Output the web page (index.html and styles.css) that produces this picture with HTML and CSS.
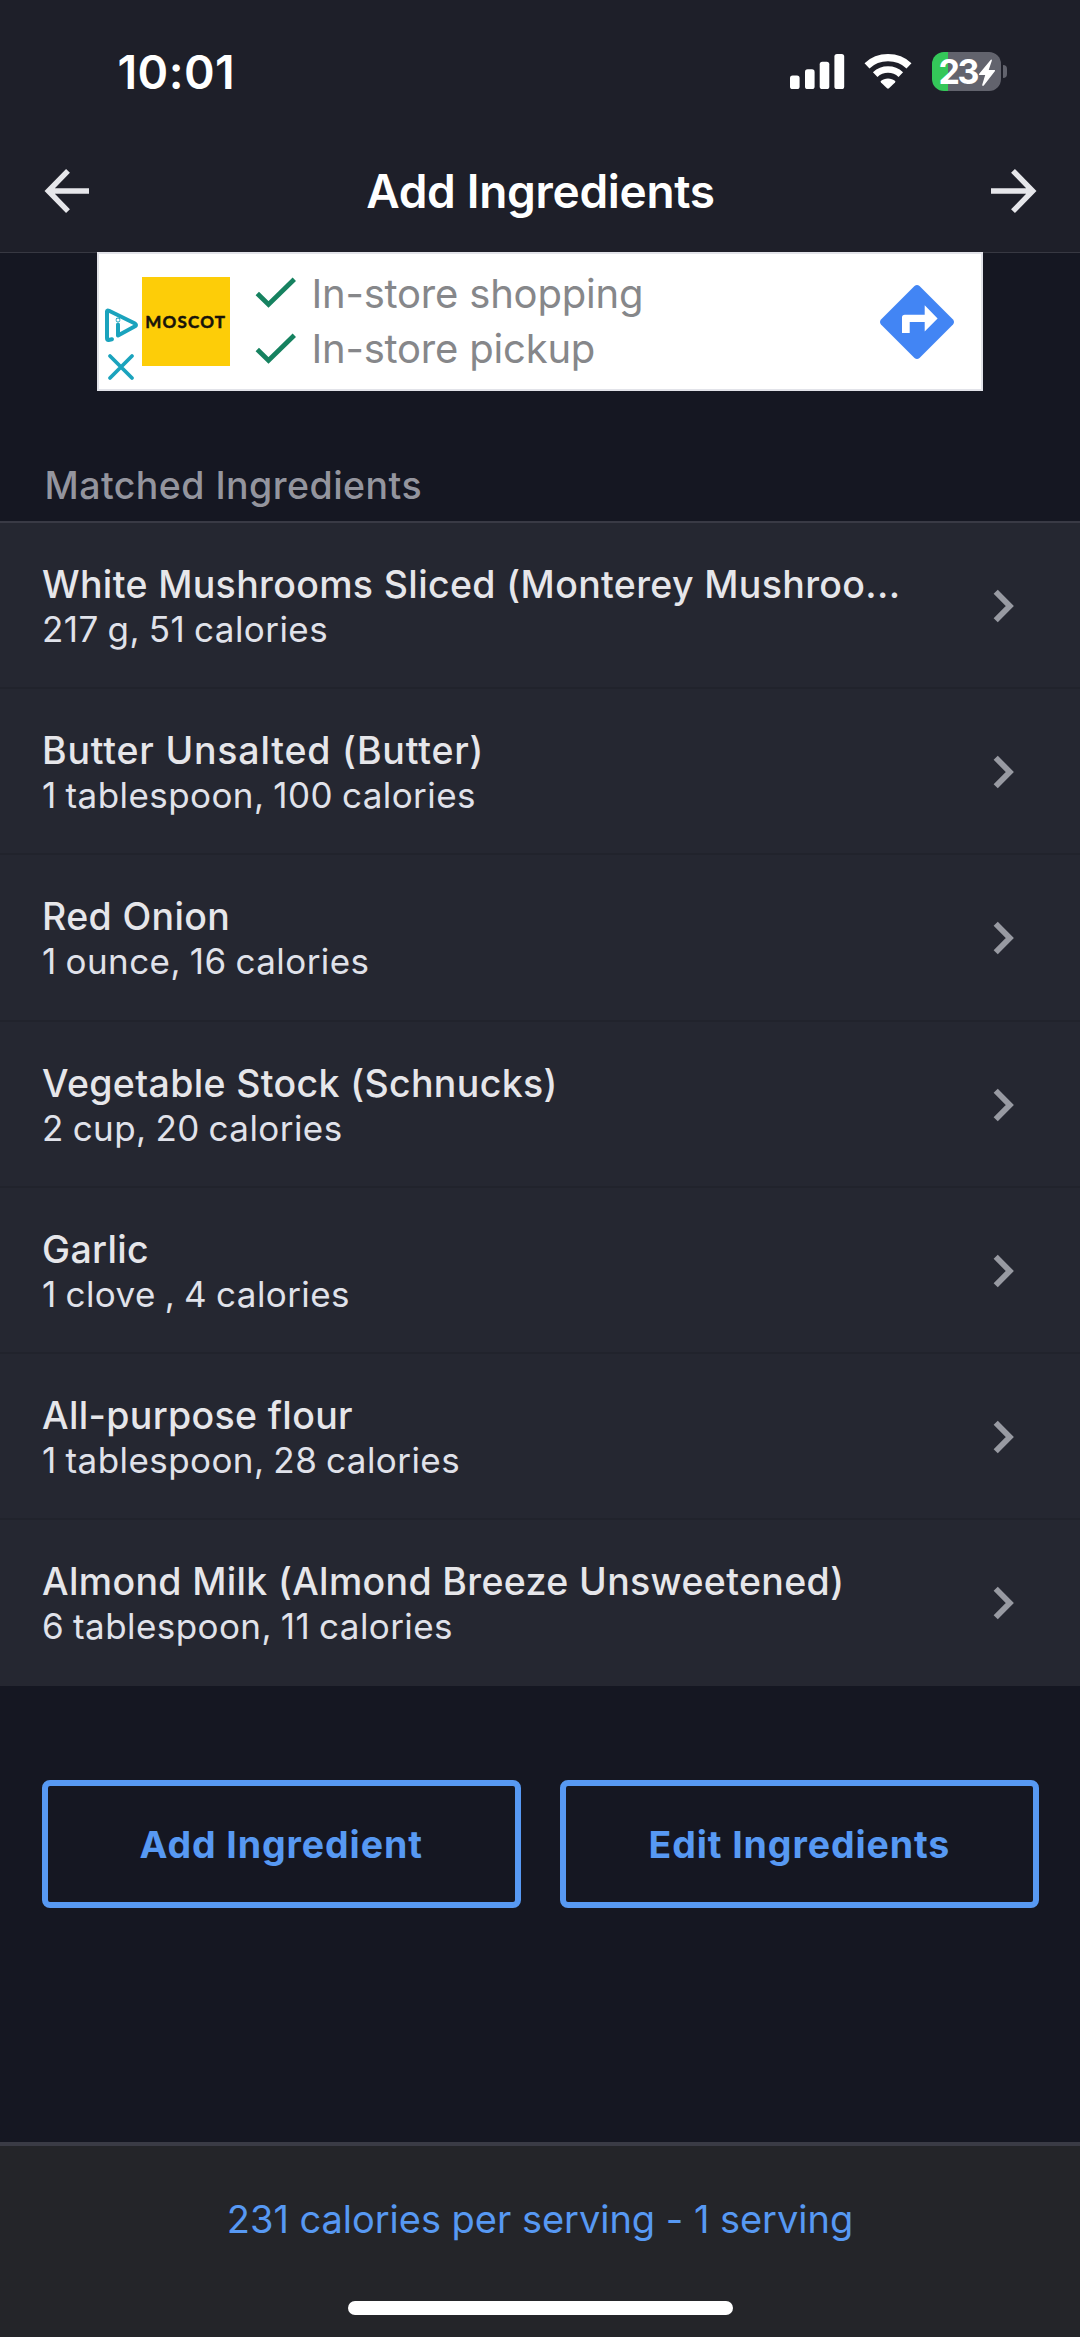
FILE: index.html
```
<!DOCTYPE html>
<html lang="en">
<head>
<meta charset="utf-8">
<title>Add Ingredients</title>
<link rel="stylesheet" href="styles.css">
</head>
<body>
<svg width="0" height="0" class="defs" aria-hidden="true">
  <symbol id="chevron" viewBox="0 0 22 34"><path d="M2.7 2.7 16.8 17 2.7 31.3" fill="none" stroke="currentColor" stroke-width="5.8"/></symbol>
  <symbol id="check" viewBox="0 0 42 32"><path d="M2.3 16.5 13.5 27.5 39.3 2.3" fill="none" stroke="currentColor" stroke-width="4.8"/></symbol>
</svg>
<div class="screen">
  <header class="header">
    <div class="status">
      <span class="time">10:01</span>
      <div class="indicators">
        <svg class="signal" width="55" height="36" viewBox="0 0 55 36" fill="#fff"><rect x="0" y="21.5" width="9.6" height="13.5" rx="2.6"/><rect x="15" y="15.3" width="9.6" height="19.7" rx="2.6"/><rect x="29.7" y="7.7" width="9.6" height="27.3" rx="2.6"/><rect x="44.4" y="0" width="9.8" height="35" rx="2.6"/></svg>
        <svg class="wifi" width="48" height="36" viewBox="0 0 48 36"><g fill="none" stroke="#fff"><path d="M3 11.8C14.5.9 33.5.9 45 11.8" stroke-width="7.2"/><path d="M11.2 20.6C18.5 13.8 29.5 13.8 36.8 20.6" stroke-width="6.6"/></g><path d="M16.8 27C20.5 23.5 27.5 23.5 31.2 27Q31.7 27.7 31 28.4L25 34.3Q24 35.2 23 34.3L17 28.4Q16.300 27.7 16.8 27Z" fill="#fff"/></svg>
        <div class="battery">
          <span class="level">23</span>
          <svg class="bolt" width="18" height="28" viewBox="0 0 18 28" fill="#fff"><path d="M12.8.8 1 15Q.5 16 1.6 16H7.2L4.2 25.7Q4.3 27.6 5.8 26.6L17 12Q17.4 10.9 16.3 10.9H10.7L13.9 1.6Q13.9.2 12.8.8Z"/></svg>
        </div>
        <span class="nub"></span>
      </div>
    </div>
    <nav class="nav">
      <svg width="46" height="46" viewBox="0 0 46 46" fill="none" stroke="#e6e6ea" stroke-width="5.4"><path d="M24 2.8 4.3 23 24 43.2M5 23H45"/></svg>
      <h1 class="title">Add Ingredients</h1>
      <svg width="46" height="46" viewBox="0 0 46 46" fill="none" stroke="#e6e6ea" stroke-width="5.4"><path d="M22 2.8 41.7 23 22 43.2M41 23H0"/></svg>
    </nav>
  </header>

  <section class="ad">
    <div class="ad-controls">
      <svg width="34" height="34" viewBox="0 0 34 34" fill="none" stroke="#1aa3bd" stroke-width="4" stroke-linecap="round" stroke-linejoin="round"><path d="M8 31.2 4.500 32Q3 32 3 30V3.500Q3 2 5 2.8L31 15.500Q33 17 31 18.300L14 27.500V16.500"/><circle cx="14" cy="12" r=".4"/></svg>
      <svg width="28" height="28" viewBox="0 0 28 28" stroke="#1aa3bd" stroke-width="3.8" stroke-linecap="round"><path d="M3 3 25 25M25 3 3 25"/></svg>
    </div>
    <div class="ad-logo">MOSCOT</div>
    <div class="ad-lines">
      <div class="ad-line"><svg class="check" width="42" height="32"><use href="#check"/></svg><span>In-store shopping</span></div>
      <div class="ad-line"><svg class="check" width="42" height="32"><use href="#check"/></svg><span>In-store pickup</span></div>
    </div>
    <svg class="directions" width="76" height="76" viewBox="0 0 76 76"><path d="M35.5 2Q38 0 40.5 2L74 35.5Q76 38 74 40.5L40.5 74Q38 76 35.5 74L2 40.5Q0 38 2 35.5Z" fill="#4285f4"/><path d="M23 49V33.5Q23 30.7 25.8 30.7H45.7V21.3L58.6 34.5 45.7 47.6V38H30.7V49Z" fill="#fff"/></svg>
  </section>

  <h2 class="section-title">Matched Ingredients</h2>
  <ul class="list">
    <li class="row"><div class="info"><div class="name">White Mushrooms Sliced (Monterey Mushroo...</div><div class="detail">217 g, 51 calories</div></div><svg class="chevron" width="22" height="34"><use href="#chevron"/></svg></li>
    <li class="row"><div class="info"><div class="name name-wide">Butter Unsalted (Butter)</div><div class="detail">1 tablespoon, 100 calories</div></div><svg class="chevron" width="22" height="34"><use href="#chevron"/></svg></li>
    <li class="row"><div class="info"><div class="name">Red Onion</div><div class="detail">1 ounce, 16 calories</div></div><svg class="chevron" width="22" height="34"><use href="#chevron"/></svg></li>
    <li class="row"><div class="info"><div class="name">Vegetable Stock (Schnucks)</div><div class="detail">2 cup, 20 calories</div></div><svg class="chevron" width="22" height="34"><use href="#chevron"/></svg></li>
    <li class="row"><div class="info"><div class="name">Garlic</div><div class="detail">1 clove , 4 calories</div></div><svg class="chevron" width="22" height="34"><use href="#chevron"/></svg></li>
    <li class="row"><div class="info"><div class="name">All-purpose flour</div><div class="detail">1 tablespoon, 28 calories</div></div><svg class="chevron" width="22" height="34"><use href="#chevron"/></svg></li>
    <li class="row"><div class="info"><div class="name">Almond Milk (Almond Breeze Unsweetened)</div><div class="detail">6 tablespoon, 11 calories</div></div><svg class="chevron" width="22" height="34"><use href="#chevron"/></svg></li>
  </ul>

  <div class="actions">
    <button class="btn">Add Ingredient</button>
    <button class="btn">Edit Ingredients</button>
  </div>

  <footer class="footer">
    <p class="summary">231 calories per serving - 1 serving</p>
    <div class="home"></div>
  </footer>
</div>
</body>
</html>
```
FILE: styles.css
```
* { box-sizing: border-box; margin: 0; padding: 0; }
body { background: #151722; font-family: Inter, "Liberation Sans", sans-serif; }
.defs { display: block; }
.screen { width: 1080px; height: 2337px; display: flex; flex-direction: column; overflow: hidden; }

.header { height: 253px; flex: none; background: #1e1f29; border-bottom: 1px solid #373842; color: #fff; }
.status { height: 130px; padding: 13px 73px 0 117.5px; display: flex; align-items: center; justify-content: space-between; }
.time { font-size: 46.5px; font-weight: 600; line-height: 56px; letter-spacing: .41px; }
.indicators { display: flex; align-items: center; }
.wifi { margin-left: 19px; }
.battery { width: 69px; height: 39px; margin-left: 20px; border-radius: 12px; background: linear-gradient(90deg, #34c759 16px, #62636d 16px); display: flex; align-items: center; padding-left: 7px; }
.level { width: 39px; font-size: 34px; font-weight: 700; line-height: 38px; letter-spacing: -2.5px; }
.bolt { margin-top: 2px; }
.nub { width: 4px; height: 13px; margin-left: 2.5px; border-radius: 0 5px 5px 0; background: #62636d; }
.nav { height: 122px; padding: 0 43px 0 44px; display: flex; align-items: center; justify-content: space-between; }
.title { font-size: 46px; font-weight: 600; line-height: 56px; letter-spacing: -.3px; }

.ad { width: 886px; height: 139px; flex: none; margin: -1px 0 0 97px; position: relative; background: #fff; border: 2px solid #e2e3e9; display: flex; align-items: center; }
.ad-controls { margin: 45px 0 0 4.5px; width: 38px; display: flex; flex-direction: column; gap: 11px; align-items: flex-start; }
.ad-controls svg:last-child { margin-left: 3px; }
.ad-logo { width: 88.5px; height: 88.5px; background: #fdcd08; color: #17130a; display: flex; align-items: center; justify-content: center; font: 700 17px/20px Lato, sans-serif; letter-spacing: 1.2px; -webkit-text-stroke: .5px #17130a; }
.ad-lines { margin: -1px 0 0 25px; color: #86878a; font-size: 40px; line-height: 55.4px; letter-spacing: -.2px; }
.ad-line { display: flex; align-items: center; gap: 14.5px; }
.check { color: #168260; }
.directions { margin: 0 26px 0 auto; }

.section-title { margin: 72px 0 0 44.5px; padding-bottom: 13px; font-size: 37.5px; font-weight: 500; line-height: 45px; letter-spacing: .45px; color: #94959e; }
.list { list-style: none; border-top: 2px solid #393a45; }
.row { height: 166.2px; padding: 0 65px 0 42px; background: #252731; border-bottom: 2px solid #21232c; display: flex; justify-content: space-between; align-items: center; }
.row:last-child { border-bottom-color: #252731; }
.info { padding-top: 4px; white-space: nowrap; }
.name { font-size: 37.5px; font-weight: 500; line-height: 45px; letter-spacing: .35px; color: #e6e6ea; }
.name-wide { letter-spacing: .8px; }
.detail { font-size: 35px; line-height: 45px; letter-spacing: .43px; word-spacing: -1.4px; color: #e0e2ea; }
.chevron { color: #989aa2; margin-top: 2px; }

.actions { margin: 94px 41px 0 41.5px; display: grid; grid-template-columns: 1fr 1fr; gap: 39px; }
.btn { height: 128px; border: 6px solid #5799f3; border-radius: 8px; background: transparent; color: #5799f3; font: 700 37.5px/45px Inter, sans-serif; letter-spacing: .9px; }

.footer { height: 195px; margin-top: auto; flex: none; background: #242529; border-top: 4px solid #3a3b45; display: flex; flex-direction: column; align-items: center; }
.summary { margin-top: 51px; font-size: 38px; line-height: 45px; letter-spacing: -.03px; color: #5799f3; }
.home { width: 385px; height: 14px; margin-top: 59px; border-radius: 7px; background: #fff; }
```
